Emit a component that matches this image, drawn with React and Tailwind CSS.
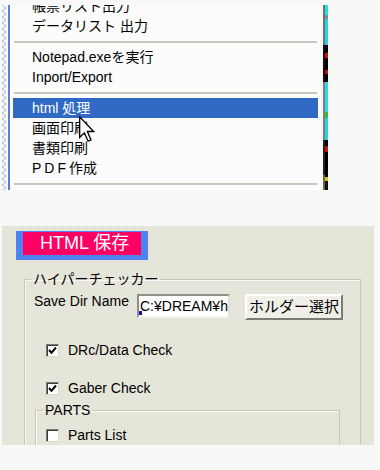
import React from 'react';

const menu = [
  { t: '帳票リスト出力', first: true },
  { t: 'データリスト 出力' },
  { sep: true, h: 'h-[11px]' },
  { t: 'Notepad.exeを実行' },
  { t: 'Inport/Export' },
  { sep: true, h: 'h-[11px]' },
  { t: 'html 処理', active: true },
  { t: '画面印刷' },
  { t: '書類印刷' },
  { t: 'PDF作成', pdf: true },
  { sep: true, h: 'h-[12px]' },
];

function Check({ checked }) {
  return (
    <span className="w-[13px] h-[13px] shrink-0 bg-white border border-t-[#7a7a72] border-l-[#7a7a72] border-r-[#dcdbd0] border-b-[#dcdbd0] shadow-[inset_1px_1px_0_#3c3c3c] flex items-center justify-center">
      {checked && (
        <svg width="9" height="9" viewBox="0 0 9 9">
          <path d="M1 4 L3.5 6.8 L8 1.5" stroke="#000" strokeWidth="2" fill="none" />
        </svg>
      )}
    </span>
  );
}

function Zigzag() {
  let pts = '';
  for (let y = 0; y <= 186; y += 6) pts += `2,${y} 6,${y + 3} `;
  return (
    <svg width="8" height="185" className="shrink-0">
      <polyline points={pts} fill="none" stroke="#aeb7c9" strokeWidth="1" />
    </svg>
  );
}

export default function App() {
  return (
    <div className="w-[380px] h-[470px] bg-[#f8f8f8] overflow-hidden relative font-['Liberation_Sans','Noto_Sans_CJK_JP',sans-serif] text-black">
      {/* menu capture */}
      <div className="mt-[5px] h-[185px] w-[328px] flex overflow-hidden">
        <Zigzag />
        <div className="w-[2px] bg-[#5b7fd0] shrink-0" />
        <div className="w-[311px] bg-[#fcfcfc] flex flex-col overflow-hidden">
          {menu.map((m, i) =>
            m.sep ? (
              <div key={i} className={`${m.h} shrink-0 flex items-center px-[4px]`}>
                <div className="h-[2px] w-full bg-[#c9c7bb]" />
              </div>
            ) : (
              <div
                key={i}
                className={`h-[20px] shrink-0 mx-[3px] pl-[19px] text-[14px] leading-[20px] whitespace-nowrap ${m.first ? '-mt-[9px]' : ''} ${m.active ? 'bg-[#316ac5] text-white' : ''}`}
              >
                {m.pdf ? (
                  <>
                    <span className="tracking-[3px]">PDF</span>作成
                  </>
                ) : (
                  m.t
                )}
              </div>
            )
          )}
        </div>
        <div className="w-[2px] shrink-0" />
        <div className="w-[2px] shrink-0 flex flex-col">
          <div className="h-[40px] bg-[#7d6e66]" />
          <div className="h-[37px] bg-[#111]" />
          <div className="h-[58px] bg-[#8a7a70]" />
          <div className="h-[35px] bg-[#222]" />
          <div className="flex-1 bg-[#6b6b3a]" />
        </div>
        <div className="w-[3px] shrink-0 flex flex-col">
          <div className="h-[10px] bg-[#18e0f0]" />
          <div className="h-[4px] bg-[#888]" />
          <div className="h-[26px] bg-[#1ad8e8]" />
          <div className="h-[8px] bg-[#000]" />
          <div className="h-[5px] bg-[#d01010]" />
          <div className="h-[12px] bg-[#000]" />
          <div className="h-[4px] bg-[#c01010]" />
          <div className="h-[8px] bg-[#000]" />
          <div className="h-[30px] bg-[#20dcec]" />
          <div className="h-[6px] bg-[#30c040]" />
          <div className="h-[22px] bg-[#1ad8e8]" />
          <div className="h-[6px] bg-[#000]" />
          <div className="h-[6px] bg-[#c81010]" />
          <div className="h-[25px] bg-[#000]" />
          <div className="h-[4px] bg-[#d8c020]" />
          <div className="flex-1 bg-[#111]" />
        </div>
      </div>

      {/* dialog capture */}
      <div className="ml-[2px] mt-[36px] w-[372px] h-[219px] flex flex-col overflow-hidden">
        <div className="h-[1px] border-t border-dotted border-[#cfcfcf]" />
        <div className="h-[2px] bg-[#f0f0ee]" />
        <div className="h-[3px] bg-[#3f3f3a]" />
        <div className="flex-1 bg-[#e6e5d9] text-[14px]">
          <div className="mt-[4px] ml-[14px] w-[132px] h-[29px] bg-[#4d82ef] pt-[1px] px-[7px]">
            <div className="h-[23px] bg-[#ff0062] text-white text-[18px] leading-[23px] pl-[17px] whitespace-nowrap">
              HTML 保存
            </div>
          </div>

          <fieldset className="mt-[11px] ml-[22px] w-[337px] h-[200px] border border-[#c8c6b8] shadow-[inset_1px_1px_0_#fafaf4]">
            <legend className="ml-[6px] px-[2px] leading-[16px] text-[14px]">ハイパーチェッカー</legend>

            <div className="mt-[7px] flex items-start pl-[9px]">
              <div className="w-[103px] -mt-[1px] leading-[16px] whitespace-nowrap">Save Dir Name</div>
              <div className="relative w-[93px] h-[24px] bg-white border-2 border-t-[#8f8f88] border-l-[#8f8f88] border-r-[#e2e1d8] border-b-[#f2f2ee] overflow-hidden">
                <div className="pl-[1px] leading-[20px] whitespace-nowrap">C:¥DREAM¥h</div>
                <span className="absolute left-0 bottom-[1px] w-[3px] h-[4px] bg-[#1010c0]" />
              </div>
              <div className="ml-[15px] w-[98px] h-[26px] bg-[#f0efe8] border-2 border-t-white border-l-white border-r-[#7b7b73] border-b-[#7b7b73] flex items-center justify-center text-[15px] whitespace-nowrap">
                ホルダー選択
              </div>
            </div>

            <div className="mt-[22px] pl-[21px] h-[16px] flex items-center gap-[9px]">
              <Check checked />
              <span className="leading-[16px]">DRc/Data Check</span>
            </div>

            <div className="mt-[22px] pl-[21px] h-[16px] flex items-center gap-[9px]">
              <Check checked />
              <span className="leading-[16px]">Gaber Check</span>
            </div>

            <fieldset className="mt-[6px] ml-[10px] w-[305px] h-[80px] border border-[#c8c6b8] shadow-[inset_1px_1px_0_#fafaf4]">
              <legend className="ml-[7px] px-[2px] leading-[16px] text-[14px]">PARTS</legend>
              <div className="mt-[9px] pl-[10px] h-[16px] flex items-center gap-[9px]">
                <Check />
                <span className="leading-[16px]">Parts List</span>
              </div>
            </fieldset>
          </fieldset>
        </div>
      </div>

      {/* mouse pointer */}
      <svg className="absolute left-[79px] top-[116px]" width="16" height="27" viewBox="0 0 12 20">
        <path d="M0.5 0.5 L0.5 16 L4 12.5 L6.8 18.8 L9 17.8 L6.3 11.5 L11 11.5 Z" fill="#fff" stroke="#000" strokeWidth="1" strokeLinejoin="miter" />
      </svg>
    </div>
  );
}
